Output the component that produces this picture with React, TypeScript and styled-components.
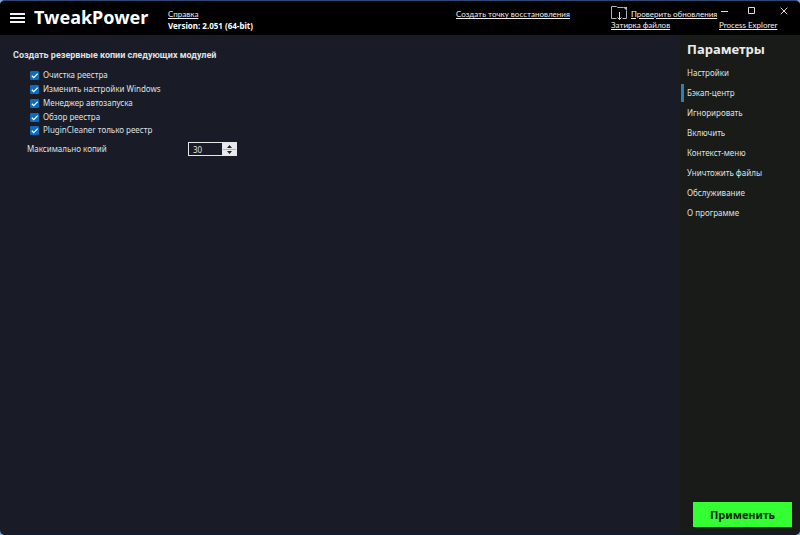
import React, { useState } from "react";
import styled, { createGlobalStyle } from "styled-components";

const GlobalStyle = createGlobalStyle`
  * { box-sizing: border-box; }
  body {
    margin: 0;
    background: #7fa9cf;
    color: #dfe0e2;
    font: 8px/14px "Noto Sans", "Open Sans", sans-serif;
  }
  button, input { font: inherit; color: inherit; }
`;

const Window = styled.div`
  min-height: 100vh;
  display: grid;
  grid-template-columns: minmax(0, 1fr) 120px;
  grid-template-rows: 34px 1fr;
  background: #191c26;
  border-top: 1px solid #294872;
  border-bottom: 1px solid #101a2c;
  border-radius: 5px;
  overflow: hidden;
`;

const Header = styled.header`
  grid-column: 1 / -1;
  display: flex;
  background: #000;
  color: #fff;
`;

const MenuButton = styled.button`
  width: 34px;
  padding: 0 0 0 10px;
  border: 0;
  background: none;
  display: flex;
  align-items: center;
`;

const Title = styled.h1`
  width: 134px;
  margin: 0;
  font-size: 18px;
  line-height: 32px;
  font-weight: 700;
  white-space: nowrap;
`;

const Stack = styled.div<{ $width?: number }>`
  width: ${(p) => (p.$width ? `${p.$width}px` : "auto")};
  padding-top: 7px;
  display: flex;
  flex-direction: column;
  align-items: flex-start;
  line-height: 12px;
  white-space: nowrap;
`;

const Version = styled.strong`
  font-size: 8px;
`;

const Spacer = styled.div`
  flex: 1;
`;

const HeaderLink = styled.a`
  color: #f0f0f0;
  font: 8px/12px Lato, "Noto Sans", sans-serif;
  text-decoration: underline;
  white-space: nowrap;
`;

const UpdateRow = styled.div`
  height: 11px;
  display: flex;
  align-items: center;
  gap: 3px;
`;

const WindowArea = styled.div`
  width: 81px;
  display: flex;
  flex-direction: column;
  align-items: flex-start;
`;

const WindowControls = styled.div`
  align-self: stretch;
  height: 18px;
  display: flex;
  justify-content: space-between;
  padding: 0 9px 0 0;
`;

const WindowButton = styled.button`
  width: 15px;
  padding: 2px 0 0;
  border: 0;
  background: none;
  display: flex;
  align-items: center;
  justify-content: center;
  &:first-child { width: 9px; }
`;

const Content = styled.main`
  padding: 12px 13px;
`;

const Heading = styled.h2`
  margin: 0 0 5px;
  font: 700 9px/16px Roboto, "Noto Sans", sans-serif;
`;

const ModuleList = styled.div`
  padding-left: 17px;
`;

const CheckLabel = styled.label`
  display: flex;
  align-items: center;
  height: 14px;
  gap: 4px;
  &:last-child { height: 12px; }
`;

const Checkbox = styled.input`
  appearance: none;
  width: 9px;
  height: 9px;
  margin: 0;
  border-radius: 1px;
  border: 1px solid #0f6cbd;
  &:checked {
    background: #0f6cbd url("data:image/svg+xml,%3Csvg xmlns='http://www.w3.org/2000/svg' viewBox='0 0 8 8'%3E%3Cpath d='M1.3 4l1.8 1.8L6.8 2' fill='none' stroke='white' stroke-width='1.1'/%3E%3C/svg%3E") center / 8px 8px no-repeat;
  }
`;

const CopiesRow = styled.div`
  display: flex;
  align-items: center;
  margin-top: 6px;
  padding-left: 14px;
`;

const CopiesLabel = styled.label`
  width: 161px;
`;

const Spinner = styled.div`
  width: 49px;
  height: 14px;
  display: flex;
  border: 1px solid #e6e7ea;
`;

const NumberInput = styled.input`
  min-width: 0;
  flex: 1;
  padding: 2px 0 0 4px;
  border: 0;
  border-right: 1px solid #e6e7ea;
  background: #191c26;
  line-height: 10px;
  outline: 0;
`;

const Steps = styled.div`
  width: 13px;
  display: grid;
  grid-template-rows: 1fr 1fr;
  background: #aeb1b8;
`;

const StepButton = styled.button`
  min-height: 0;
  padding: 0;
  border: 0;
  background: #e9eaed;
  display: flex;
  align-items: center;
  justify-content: center;
  & + & { border-top: 1px solid #aeb1b8; }
`;

const Sidebar = styled.aside`
  display: flex;
  flex-direction: column;
  background: #191b19;
  padding-bottom: 7px;
`;

const SidebarTitle = styled.h2`
  margin: 0;
  padding: 4px 0 5px 7px;
  color: #ebebeb;
  font-size: 13px;
  line-height: 20px;
`;

const NavItem = styled.a<{ $active?: boolean }>`
  display: flex;
  align-items: center;
  height: 18px;
  margin: 0 0 2px 1px;
  padding-left: 3px;
  border-left: 3px solid ${(p) => (p.$active ? "#2e7fb4" : "transparent")};
  color: inherit;
  text-decoration: none;
`;

const ApplyButton = styled.button`
  margin: auto 8px 0 13px;
  height: 25px;
  padding: 0;
  border: 0;
  background: #33ff33;
  color: #0b1c0b;
  font-size: 11px;
  font-weight: 700;
`;

const modules = [
  "Очистка реестра",
  "Изменить настройки Windows",
  "Менеджер автозапуска",
  "Обзор реестра",
  "PluginCleaner только реестр",
];

const sections = [
  "Настройки",
  "Бэкап-центр",
  "Игнорировать",
  "Включить",
  "Контекст-меню",
  "Уничтожить файлы",
  "Обслуживание",
  "О программе",
];

export default function App() {
  const [copies, setCopies] = useState(30);
  const [active, setActive] = useState("Бэкап-центр");

  return (
    <>
      <GlobalStyle />
      <Window>
        <Header>
          <MenuButton aria-label="Меню">
            <svg width="15" height="10" viewBox="0 0 15 10">
              <path d="M0 1h15M0 5h15M0 9h15" stroke="#f4f4f4" strokeWidth="2" />
            </svg>
          </MenuButton>
          <Title>TweakPower</Title>
          <Stack>
            <HeaderLink href="#help">Справка</HeaderLink>
            <Version>Version: 2.051 (64-bit)</Version>
          </Stack>
          <Spacer />
          <Stack $width={155}>
            <HeaderLink href="#restore">Создать точку восстановления</HeaderLink>
          </Stack>
          <Stack $width={108}>
            <UpdateRow>
              <svg width="17" height="15" viewBox="0 0 17 15" fill="none" stroke="#b5b5b5">
                <path d="M5.500 12.500H.5V.5h5l1 1h6M15.500 5v7.500h-4" />
                <path d="M12 1h4v4z" fill="#b5b5b5" stroke="none" />
                <path d="M8.500 6v7.500M6.500 11.500l2 2 2-2" stroke="#e0e0e0" />
              </svg>
              <HeaderLink href="#updates">Проверить обновления</HeaderLink>
            </UpdateRow>
            <HeaderLink href="#wipe">Затирка файлов</HeaderLink>
          </Stack>
          <WindowArea>
            <WindowControls>
              <WindowButton aria-label="Свернуть">
                <svg width="8" height="8" viewBox="0 0 8 8" stroke="#ddd">
                  <path d="M1 4.500h7" />
                </svg>
              </WindowButton>
              <WindowButton aria-label="Развернуть">
                <svg width="8" height="8" viewBox="0 0 8 8" fill="none" stroke="#ddd">
                  <path d="M.5.5h6v6h-6z" />
                </svg>
              </WindowButton>
              <WindowButton aria-label="Закрыть">
                <svg width="8" height="8" viewBox="0 0 8 8" stroke="#ddd">
                  <path d="M.7.7l6.600 6.600M7.300.7L.7 7.300" />
                </svg>
              </WindowButton>
            </WindowControls>
            <HeaderLink href="#process">Process Explorer</HeaderLink>
          </WindowArea>
        </Header>

        <Content>
          <Heading>Создать резервные копии следующих модулей</Heading>
          <ModuleList>
            {modules.map((name) => (
              <CheckLabel key={name}>
                <Checkbox type="checkbox" defaultChecked />
                {name}
              </CheckLabel>
            ))}
          </ModuleList>
          <CopiesRow>
            <CopiesLabel htmlFor="copies">Максимально копий</CopiesLabel>
            <Spinner>
              <NumberInput
                id="copies"
                inputMode="numeric"
                value={copies}
                onChange={(e) => setCopies(Number(e.target.value) || 0)}
              />
              <Steps>
                <StepButton aria-label="Больше" onClick={() => setCopies(copies + 1)}>
                  <svg width="5" height="3" viewBox="0 0 5 3">
                    <path d="M0 3L2.500 0 5 3z" fill="#222" />
                  </svg>
                </StepButton>
                <StepButton aria-label="Меньше" onClick={() => setCopies(Math.max(0, copies - 1))}>
                  <svg width="5" height="3" viewBox="0 0 5 3">
                    <path d="M0 0h5L2.500 3z" fill="#222" />
                  </svg>
                </StepButton>
              </Steps>
            </Spinner>
          </CopiesRow>
        </Content>

        <Sidebar>
          <SidebarTitle>Параметры</SidebarTitle>
          <nav>
            {sections.map((name) => (
              <NavItem
                key={name}
                href="#section"
                $active={name === active}
                onClick={() => setActive(name)}
              >
                {name}
              </NavItem>
            ))}
          </nav>
          <ApplyButton>Применить</ApplyButton>
        </Sidebar>
      </Window>
    </>
  );
}
